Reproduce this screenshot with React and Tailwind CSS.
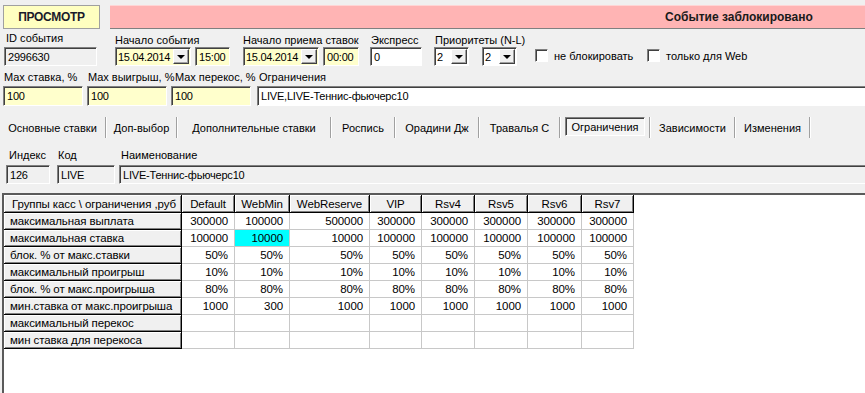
import React from 'react'

const sunken =
  'border border-t-[#808080] border-l-[#808080] border-b-white border-r-white shadow-[inset_1px_1px_0_#404040]'
const raised =
  'border border-t-white border-l-white border-r-[#404040] border-b-[#404040] shadow-[inset_-1px_-1px_0_#a0a0a0]'

function DropBtn() {
  return (
    <div className={`w-[16px] h-[15px] shrink-0 mr-[1px] bg-[#f0f0f0] flex items-center justify-center ${raised}`}>
      <div className="w-0 h-0 border-x-[4px] border-t-[4px] border-x-transparent border-t-black" />
    </div>
  )
}

function Input({ className, children }) {
  return (
    <div className={`flex items-center pl-[3px] whitespace-nowrap overflow-hidden tracking-[-0.2px] ${sunken} ${className}`}>
      {children}
    </div>
  )
}

function Combo({ className, value }) {
  return (
    <div className={`flex items-center ${sunken} ${className}`}>
      <span className="flex-1 pl-[2px] whitespace-nowrap overflow-hidden tracking-[-0.3px]">{value}</span>
      <DropBtn />
    </div>
  )
}

function Check({ label }) {
  return (
    <div className="flex items-center gap-[6px]">
      <div className={`w-[13px] h-[13px] shrink-0 bg-white ${sunken}`} />
      <span className="whitespace-nowrap">{label}</span>
    </div>
  )
}

const tabs = [
  { name: 'Основные ставки', w: 'w-[105px]' },
  { name: 'Доп-выбор', w: 'w-[69px]' },
  { name: 'Дополнительные ставки', w: 'w-[152px]' },
  { name: 'Роспись', w: 'w-[62px]' },
  { name: 'Орадини Дж', w: 'w-[82px]' },
  { name: 'Травалья С', w: 'w-[79px]' },
  { name: 'Ограничения', w: 'w-[88px]', active: true },
  { name: 'Зависимости', w: 'w-[83px]' },
  { name: 'Изменения', w: 'w-[73px]' },
]

const cols = ['Default', 'WebMin', 'WebReserve', 'VIP', 'Rsv4', 'Rsv5', 'Rsv6', 'Rsv7']

const rows = [
  ['максимальная выплата', ['300000', '100000', '500000', '300000', '300000', '300000', '300000', '300000']],
  ['максимальная ставка', ['100000', '10000', '10000', '100000', '100000', '100000', '100000', '100000']],
  ['блок. % от макс.ставки', Array(8).fill('50%')],
  ['максимальный проигрыш', Array(8).fill('10%')],
  ['блок. % от макс.проигрыша', Array(8).fill('80%')],
  ['мин.ставка от макс.проигрыша', ['1000', '300', '1000', '1000', '1000', '1000', '1000', '1000']],
  ['максимальный перекос', Array(8).fill('')],
  ['мин ставка для перекоса', Array(8).fill('')],
]

const fixedCell =
  'bg-[#f0f0f0] border-r border-b border-black shadow-[inset_1px_1px_0_#fff,inset_-1px_-1px_0_#808080] flex items-center whitespace-nowrap overflow-hidden'

export default function App() {
  return (
    <div className="w-[865px] h-[393px] overflow-hidden bg-[#f0f0f0] text-[11px] leading-[14px] text-black font-['Liberation_Sans',Arial,sans-serif] flex flex-col">
      {/* header bar */}
      <div className="flex pt-[5px] pl-[3px] h-[29px] shrink-0">
        <div className="w-[97px] h-[24px] shrink-0 bg-[#ffffc0] border border-[#a0a0a0] flex items-center justify-center font-bold text-[12px] tracking-[-0.3px] text-[#1a1a2a]">
          ПРОСМОТР
        </div>
        <div className="ml-[10px] w-[770px] h-[24px] shrink-0 bg-[#ffb4b4] border-b border-[#808080] shadow-[inset_0_1px_0_#ffd6d6] flex items-center pl-[555px] font-bold text-[12px] text-[#1a1a1a] whitespace-nowrap">
          Событие заблокировано
        </div>
      </div>

      {/* event fields */}
      <div className="flex pl-[4px] shrink-0">
        <div className="w-[93px] shrink-0">
          <div className="h-[18px] pl-[2px] pt-[2px]">ID события</div>
          <Input className="h-[19px] bg-[#f0f0f0]">2996630</Input>
        </div>
        <div className="ml-[18px] w-[115px] shrink-0">
          <div className="h-[18px] pt-[4px] whitespace-nowrap">Начало события</div>
          <div className="flex gap-[4px]">
            <Combo className="w-[76px] h-[19px] bg-[#ffffcc]" value="15.04.2014" />
            <Input className="w-[35px] h-[19px] bg-[#ffffcc]">15:00</Input>
          </div>
        </div>
        <div className="ml-[13px] w-[116px] shrink-0">
          <div className="h-[18px] pt-[4px] whitespace-nowrap">Начало приема ставок</div>
          <div className="flex gap-[4px]">
            <Combo className="w-[76px] h-[19px] bg-[#ffffcc]" value="15.04.2014" />
            <Input className="w-[36px] h-[19px] bg-[#ffffcc]">00:00</Input>
          </div>
        </div>
        <div className="ml-[11px] w-[52px] shrink-0">
          <div className="h-[18px] pl-[1px] pt-[4px]">Экспресс</div>
          <Input className="h-[19px] bg-white">0</Input>
        </div>
        <div className="ml-[12px] w-[83px] shrink-0">
          <div className="h-[18px] pl-[1px] pt-[4px] whitespace-nowrap">Приоритеты (N-L)</div>
          <div className="flex gap-[13px]">
            <Combo className="w-[35px] h-[19px] bg-white" value="2" />
            <Combo className="w-[35px] h-[19px] bg-white" value="2" />
          </div>
        </div>
        <div className="ml-[18px] flex flex-col">
          <div className="h-[17px]" />
          <div className="h-[19px] flex items-center">
            <div className="w-[112px]"><Check label="не блокировать" /></div>
            <Check label="только для Web" />
          </div>
        </div>
      </div>

      {/* limits fields */}
      <div className="flex pl-[3px] gap-[4px] shrink-0">
        <div className="w-[80px] shrink-0">
          <div className="h-[20px] pl-[1px] pt-[4px] whitespace-nowrap">Max ставка, %</div>
          <Input className="h-[20px] bg-[#ffffcc]">100</Input>
        </div>
        <div className="w-[80px] shrink-0">
          <div className="h-[20px] pl-[1px] pt-[4px] whitespace-nowrap">Max выигрыш, %</div>
          <Input className="h-[20px] bg-[#ffffcc]">100</Input>
        </div>
        <div className="w-[80px] shrink-0">
          <div className="h-[20px] pl-[4px] pt-[4px] whitespace-nowrap">Max перекос, %</div>
          <Input className="h-[20px] bg-[#ffffcc]">100</Input>
        </div>
        <div className="ml-[2px] w-[615px] shrink-0">
          <div className="h-[20px] pl-[2px] pt-[4px]">Ограничения</div>
          <Input className="h-[20px] bg-white">LIVE,LIVE-Теннис-фьючерс10</Input>
        </div>
      </div>

      {/* tabs */}
      <div className="flex mt-[11px] h-[21px] shrink-0">
        {tabs.map((t) => (
          <React.Fragment key={t.name}>
            <div className={`${t.w} h-full shrink-0 flex`}>
              {t.active ? (
                <div className={`mx-[4px] flex-1 h-[19px] flex items-center justify-center bg-[#f4f4f4] ${sunken}`}>
                  {t.name}
                </div>
              ) : (
                <div className="flex-1 flex items-center justify-center whitespace-nowrap">{t.name}</div>
              )}
            </div>
            <div className="w-[2px] h-full shrink-0 border-l border-l-[#a0a0a0] border-r border-r-white" />
          </React.Fragment>
        ))}
      </div>

      {/* index fields */}
      <div className="flex pl-[6px] shrink-0">
        <div className="w-[44px] shrink-0">
          <div className="h-[27px] pl-[3px] pt-[10px]">Индекс</div>
          <Input className="h-[19px] bg-[#f0f0f0]">126</Input>
        </div>
        <div className="ml-[7px] w-[58px] shrink-0">
          <div className="h-[27px] pl-[1px] pt-[10px]">Код</div>
          <Input className="h-[19px] bg-[#f0f0f0]">LIVE</Input>
        </div>
        <div className="ml-[4px] w-[760px] shrink-0">
          <div className="h-[27px] pl-[2px] pt-[10px]">Наименование</div>
          <Input className="h-[19px] bg-[#f0f0f0]">LIVE-Теннис-фьючерс10</Input>
        </div>
      </div>

      {/* grid */}
      <div className="mt-[9px] ml-[2px] w-[880px] flex-1 bg-white border-t-2 border-l-2 border-t-[#5a5a5a] border-l-[#5a5a5a] text-[11.5px] tracking-[-0.1px]">
        <div className="grid grid-cols-[178px_53px_55px_80px_52px_53px_53px_54px_52px] auto-rows-[17px] grid-rows-[18px] w-fit">
          <div className={`${fixedCell} pl-[8px]`}>Группы касс \ ограничения ,руб</div>
          {cols.map((c) => (
            <div key={c} className={`${fixedCell} justify-center`}>{c}</div>
          ))}
          {rows.map(([label, vals]) => (
            <React.Fragment key={label}>
              <div className={`${fixedCell} pl-[6px]`}>{label}</div>
              {vals.map((v, i) => (
                <div
                  key={i}
                  className={`border-r border-b border-[#c8c8c8] flex items-center justify-end pr-[6px] ${
                    label === 'максимальная ставка' && i === 1 ? 'bg-[#00ffff]' : 'bg-white'
                  }`}
                >
                  {v}
                </div>
              ))}
            </React.Fragment>
          ))}
        </div>
      </div>
    </div>
  )
}
